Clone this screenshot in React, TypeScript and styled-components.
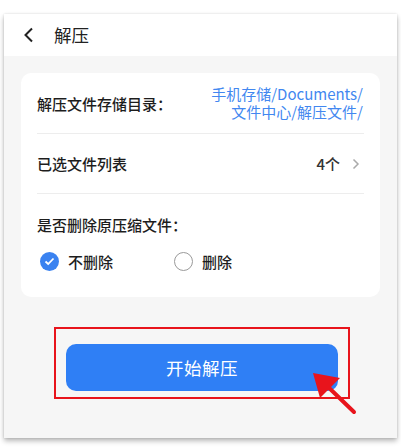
import React from "react";
import styled, { createGlobalStyle } from "styled-components";

const Global = createGlobalStyle`
  html, body { margin: 0; padding: 0; background: #ffffff; }
  body { font-family: "Noto Sans CJK SC", "Noto Sans", sans-serif; }
  * { box-sizing: border-box; }
`;

const Page = styled.div`
  width: 401px;
  height: 448px;
  padding: 14px 4px 10px 4px;
`;

const Phone = styled.div`
  width: 393px;
  height: 424px;
  background: #f6f6f6;
  display: flex;
  flex-direction: column;
  box-shadow: 0 3px 5px rgba(0, 0, 0, 0.28), 0 0 2px rgba(0, 0, 0, 0.12);
  position: relative;
`;

const Header = styled.div`
  height: 42px;
  background: #ffffff;
  display: flex;
  align-items: center;
  padding-left: 19px;
  gap: 19px;
`;

const Title = styled.span`
  font-size: 17.5px;
  color: #222;
  padding-bottom: 1px;
`;

const Body = styled.div`
  flex: 1;
  padding: 17px 17px 0 17px;
  display: flex;
  flex-direction: column;
`;

const Card = styled.div`
  background: #ffffff;
  border-radius: 10px;
  padding: 0 16px 0 16px;
  height: 224px;
  display: flex;
  flex-direction: column;
`;

const Row = styled.div<{ $h: number; $border?: boolean }>`
  height: ${(p) => p.$h}px;
  display: flex;
  align-items: center;
  justify-content: space-between;
  border-bottom: ${(p) => (p.$border ? "1px solid #ededed" : "none")};
`;

const Label = styled.span`
  font-size: 15px;
  font-weight: 500;
  color: #1d1d1d;
`;

const Path = styled.span`
  display: flex;
  flex-direction: column;
  align-items: flex-end;
  font-size: 15px;
  color: #4287f0;
  line-height: 18px;
  padding-right: 1px;
`;

const Count = styled.span`
  display: flex;
  align-items: center;
  gap: 12px;
  font-size: 15px;
  font-weight: 500;
  color: #333;
  padding-right: 4px;
`;

const Section = styled.div`
  display: flex;
  flex-direction: column;
  padding-top: 20px;
  gap: 16px;
`;

const Options = styled.div`
  display: flex;
  align-items: center;
  padding-left: 3px;
`;

const Option = styled.div<{ $w: number }>`
  display: flex;
  align-items: center;
  gap: 9px;
  width: ${(p) => p.$w}px;
  font-size: 15px;
  font-weight: 500;
  color: #1d1d1d;
`;

const Radio = styled.span<{ $on?: boolean }>`
  width: 19px;
  height: 19px;
  border-radius: 50%;
  display: flex;
  align-items: center;
  justify-content: center;
  background: ${(p) => (p.$on ? "#3a82f0" : "#fff")};
  border: ${(p) => (p.$on ? "none" : "1.5px solid #9a9a9a")};
`;

const ButtonArea = styled.div`
  margin-top: 30px;
  margin-left: 33px;
  width: 296px;
  height: 72px;
  border: 2.5px solid #e8141c;
  display: flex;
  align-items: center;
  justify-content: center;
  padding-top: 8px;
`;

const StartButton = styled.button`
  width: 272px;
  height: 47px;
  border: none;
  border-radius: 10px;
  background: #2f7ff5;
  color: #ffffff;
  font-family: inherit;
  font-size: 17.5px;
  letter-spacing: 0.5px;
  cursor: pointer;
`;

const Pointer = styled.svg`
  position: absolute;
  left: 304px;
  top: 354px;
`;

export default function App() {
  return (
    <>
      <Global />
      <Page>
        <Phone>
          <Header>
            <svg width="12" height="16" viewBox="0 0 12 16">
              <path d="M9 1.5 L2.5 8 L9 14.5" fill="none" stroke="#222" strokeWidth="2" />
            </svg>
            <Title>解压</Title>
          </Header>
          <Body>
            <Card>
              <Row $h={61} $border>
                <Label>解压文件存储目录：</Label>
                <Path>
                  <span>手机存储/Documents/</span>
                  <span>文件中心/解压文件/</span>
                </Path>
              </Row>
              <Row $h={60} $border>
                <Label>已选文件列表</Label>
                <Count>
                  4个
                  <svg width="8" height="12" viewBox="0 0 8 12">
                    <path d="M1.5 1.5 L6 6 L1.5 10.5" fill="none" stroke="#aaa" strokeWidth="1.5" />
                  </svg>
                </Count>
              </Row>
              <Section>
                <Label>是否删除原压缩文件：</Label>
                <Options>
                  <Option $w={134}>
                    <Radio $on>
                      <svg width="11" height="9" viewBox="0 0 11 9">
                        <path d="M1.5 4.5 L4.2 7 L9.5 1.5" fill="none" stroke="#fff" strokeWidth="1.8" />
                      </svg>
                    </Radio>
                    不删除
                  </Option>
                  <Option $w={80}>
                    <Radio />
                    删除
                  </Option>
                </Options>
              </Section>
            </Card>
            <ButtonArea>
              <StartButton>开始解压</StartButton>
            </ButtonArea>
          </Body>
          <Pointer width="50" height="48" viewBox="0 0 50 48">
            <line x1="46" y1="44" x2="17" y2="16" stroke="#e8141c" strokeWidth="4" strokeLinecap="round" />
            <polygon points="5,5 32,10 12,30" fill="#e8141c" />
          </Pointer>
        </Phone>
      </Page>
    </>
  );
}
